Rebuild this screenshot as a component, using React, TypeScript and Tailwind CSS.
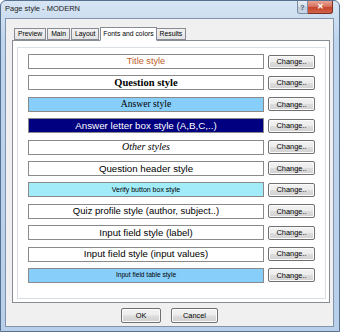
import React from "react";

const ui = { fontFamily: '"Liberation Sans", Arial, sans-serif' };
const serif = { fontFamily: '"Liberation Serif", "Times New Roman", serif' };

const styles: { label: string; box: string; text: string; font: React.CSSProperties }[] = [
  { label: "Title style", box: "bg-white", text: "text-[9.2px] text-[#c0602a]", font: ui },
  { label: "Question style", box: "bg-white", text: "text-[10.5px] font-bold text-black", font: serif },
  { label: "Answer style", box: "bg-[#87cefa]", text: "text-[9.6px] text-black", font: serif },
  { label: "Answer letter box style (A,B,C,..)", box: "bg-[#000080]", text: "text-[9.8px] text-white", font: ui },
  { label: "Other styles", box: "bg-white", text: "text-[10px] italic text-black", font: serif },
  { label: "Question header style", box: "bg-white", text: "text-[9.7px] text-black", font: ui },
  { label: "Verify button box style", box: "bg-[#a2ecfa]", text: "text-[7px] text-black", font: ui },
  { label: "Quiz profile style (author, subject..)", box: "bg-white", text: "text-[9.5px] text-black", font: ui },
  { label: "Input field style (label)", box: "bg-white", text: "text-[9.6px] text-black", font: ui },
  { label: "Input field style (input values)", box: "bg-white", text: "text-[9.6px] text-black", font: ui },
  { label: "Input field table style", box: "bg-[#87cefa]", text: "text-[6.6px] text-black", font: ui },
];

const tabs = ["Preview", "Main", "Layout", "Fonts and colors", "Results"];

function WinButton({ children, className }: { children: React.ReactNode; className: string }) {
  return (
    <button
      type="button"
      style={ui}
      className={[
        "flex items-center justify-center rounded-[2px] border border-[#707070] text-[7.4px] leading-none text-black",
        "bg-[linear-gradient(#f3f3f3_0%,#ececec_48%,#dddddd_52%,#d0d0d0_100%)] shadow-[inset_0_0_0_1px_#fbfbfb]",
        className,
      ].join(" ")}
    >
      {children}
    </button>
  );
}

export default function App() {
  return (
    <div
      style={ui}
      className="flex h-[332px] w-[340px] flex-col overflow-hidden rounded-t-[6px] border border-[#56708f] bg-[linear-gradient(#d7e5f4_0%,#bfd5ed_12%,#b8cfe9_100%)]"
    >
      {/* title bar */}
      <div className="flex h-[17px] shrink-0 items-start justify-between">
        <span className="pl-[4px] pt-[4px] text-[7.5px] leading-none text-[#1b1b1b]">
          Page style - MODERN
        </span>
        <div className="mr-[6px] flex">
          <div className="flex h-[13px] w-[11px] items-center justify-center rounded-bl-[3px] border border-t-0 border-[#7d8ea3] bg-[linear-gradient(#e9eef5_0%,#d2dbe7_50%,#bcc9d9_51%,#cdd8e6_100%)] text-[7px] font-bold leading-none text-[#4a5a6e]">
            ?
          </div>
          <div className="flex h-[13px] w-[25px] items-center justify-center rounded-br-[3px] border border-l-0 border-t-0 border-[#7b3026] bg-[linear-gradient(#e8a496_0%,#d7735f_45%,#c7442b_55%,#d0644a_100%)] text-[8px] font-bold leading-none text-white">
            ✕
          </div>
        </div>
      </div>

      {/* client area */}
      <div className="mb-[4px] ml-[4px] mr-[5px] flex flex-1 flex-col border border-[#7f93ad] bg-[#f0f0f0]">
        <div className="pl-[6px] pr-[3px] pt-[8px]">
          {/* tabs */}
          <div className="flex items-end pl-[2px]">
            {tabs.map((t) => {
              const active = t === "Fonts and colors";
              return (
                <div
                  key={t}
                  className={[
                    "relative flex items-center justify-center border border-[#898c95] text-[6.8px] leading-none text-black",
                    active
                      ? "z-10 -mb-px -mr-px h-[14px] border-b-white bg-white px-[2px]"
                      : "mr-px h-[12px] bg-[linear-gradient(#f2f2f2,#e3e3e3)] px-[3px]",
                  ].join(" ")}
                >
                  {t}
                </div>
              );
            })}
          </div>

          {/* tab page */}
          <div className="border border-[#898c95] bg-white pb-[3px] pl-[4px] pr-[3px] pt-[6px]">
            <div className="flex flex-col gap-[6.4px] border border-[#d9dfe4] bg-white px-[10px] pb-[15px] pt-[6px]">
              {styles.map((s) => (
                <div key={s.label} className="flex h-[15px] items-center gap-[4px]">
                  <div
                    className={`flex h-[15px] flex-1 items-center justify-center border border-[#8a8a8a] leading-none ${s.box}`}
                  >
                    <span style={s.font} className={`${s.text} whitespace-nowrap`}>
                      {s.label}
                    </span>
                  </div>
                  <WinButton className="h-[14px] w-[47px]">Change..</WinButton>
                </div>
              ))}
            </div>
          </div>
        </div>

        {/* dialog buttons */}
        <div className="mt-[5px] flex justify-center gap-[10px]">
          <WinButton className="h-[15px] w-[40px]">OK</WinButton>
          <WinButton className="h-[15px] w-[47px]">Cancel</WinButton>
        </div>
      </div>
    </div>
  );
}
